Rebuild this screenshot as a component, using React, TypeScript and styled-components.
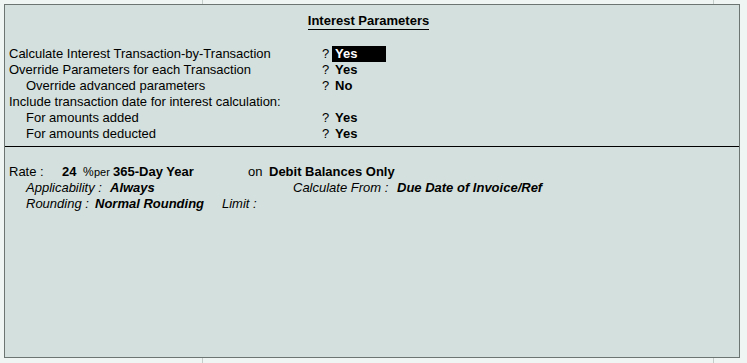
import React from 'react';
import styled, { createGlobalStyle } from 'styled-components';

const GlobalStyle = createGlobalStyle`
  html, body {
    margin: 0;
    padding: 0;
    background: #eef5f3;
    font-family: "Liberation Sans", Arial, sans-serif;
    font-size: 13px;
    color: #000;
  }
`;

const Screen = styled.div`
  width: 747px;
  height: 363px;
  overflow: hidden;
  background: #eef5f3;
`;

const BackStrip = styled.div<{ $h: number }>`
  height: ${(p) => p.$h}px;
  overflow: hidden;
  display: flex;
  color: #a7b1ae;
`;

const BackCell = styled.div<{ $w: number; $line?: boolean; $shift?: number }>`
  width: ${(p) => p.$w}px;
  flex: none;
  border-left: ${(p) => (p.$line ? '1px solid #c5cdcb' : 'none')};
  line-height: 16px;
  margin-top: ${(p) => p.$shift ?? 0}px;
  padding-left: 4px;
  box-sizing: border-box;
  white-space: nowrap;
`;

const Panel = styled.div`
  margin-left: 4px;
  width: 736px;
  height: 354px;
  box-sizing: border-box;
  border: 1px solid #6d7573;
  background: #d4e0dd;
`;

const TitleRow = styled.div`
  margin-top: 8px;
  padding-right: 7px;
  text-align: center;
`;

const Title = styled.span`
  display: inline-block;
  font-weight: bold;
  line-height: 16px;
  border-bottom: 1px solid #000;
`;

const Params = styled.div`
  margin-top: 16px;
  display: grid;
  grid-template-columns: 317px 10px 54px;
  grid-auto-rows: 16px;
  line-height: 16px;
`;

const Label = styled.div<{ $indent?: boolean }>`
  padding-left: ${(p) => (p.$indent ? 21 : 4)}px;
  white-space: nowrap;
`;

const Ask = styled.div`
  white-space: nowrap;
`;

const Value = styled.div<{ $active?: boolean }>`
  padding-left: 3px;
  font-weight: bold;
  background: ${(p) => (p.$active ? '#000' : 'transparent')};
  color: ${(p) => (p.$active ? '#fff' : '#000')};
`;

const Divider = styled.div`
  margin-top: 4px;
  height: 1px;
  background: #000;
`;

const Summary = styled.div`
  margin-top: 17px;
  line-height: 16px;
`;

const Line = styled.div<{ $pad: number }>`
  display: flex;
  height: 16px;
  padding-left: ${(p) => p.$pad}px;
  white-space: nowrap;
`;

const Cell = styled.span<{ $w?: number; $bold?: boolean; $italic?: boolean; $size?: number }>`
  flex: none;
  width: ${(p) => (p.$w ? `${p.$w}px` : 'auto')};
  font-weight: ${(p) => (p.$bold ? 'bold' : 'normal')};
  font-style: ${(p) => (p.$italic ? 'italic' : 'normal')};
  font-size: ${(p) => p.$size ?? 13}px;
`;

const rows = [
  { label: 'Calculate Interest Transaction-by-Transaction', value: 'Yes', active: true },
  { label: 'Override Parameters for each Transaction', value: 'Yes' },
  { label: 'Override advanced parameters', value: 'No', indent: true },
  { label: 'Include transaction date for interest calculation:' },
  { label: 'For amounts added', value: 'Yes', indent: true },
  { label: 'For amounts deducted', value: 'Yes', indent: true },
];

export default function App() {
  return (
    <Screen>
      <GlobalStyle />
      <BackStrip $h={4}>
        <BackCell $w={202} />
        <BackCell $w={164} $line $shift={-12}>Name</BackCell>
        <BackCell $w={347} $shift={-12}>:&nbsp; Sharath &amp; Co</BackCell>
        <BackCell $w={34} $line />
      </BackStrip>
      <Panel>
        <TitleRow>
          <Title>Interest Parameters</Title>
        </TitleRow>
        <Params>
          {rows.map((r) => (
            <React.Fragment key={r.label}>
              <Label $indent={r.indent}>{r.label}</Label>
              <Ask>{r.value ? '?' : ''}</Ask>
              <Value $active={r.active}>{r.value ?? ''}</Value>
            </React.Fragment>
          ))}
        </Params>
        <Divider />
        <Summary>
          <Line $pad={4}>
            <Cell $w={53}>Rate :</Cell>
            <Cell $w={21} $bold>24</Cell>
            <Cell $w={11} $size={12}>%</Cell>
            <Cell $w={19} $size={11}>per</Cell>
            <Cell $w={135} $bold>365-Day Year</Cell>
            <Cell $w={21}>on</Cell>
            <Cell $bold>Debit Balances Only</Cell>
          </Line>
          <Line $pad={21}>
            <Cell $w={84} $italic>Applicability :</Cell>
            <Cell $w={183} $italic $bold>Always</Cell>
            <Cell $w={104} $italic>Calculate From :</Cell>
            <Cell $italic $bold>Due Date of Invoice/Ref</Cell>
          </Line>
          <Line $pad={21}>
            <Cell $w={69} $italic>Rounding :</Cell>
            <Cell $w={127} $italic $bold>Normal Rounding</Cell>
            <Cell $italic>Limit :</Cell>
          </Line>
        </Summary>
      </Panel>
      <BackStrip $h={6}>
        <BackCell $w={202} />
        <BackCell $w={511} $line />
        <BackCell $w={34} $line />
      </BackStrip>
    </Screen>
  );
}
